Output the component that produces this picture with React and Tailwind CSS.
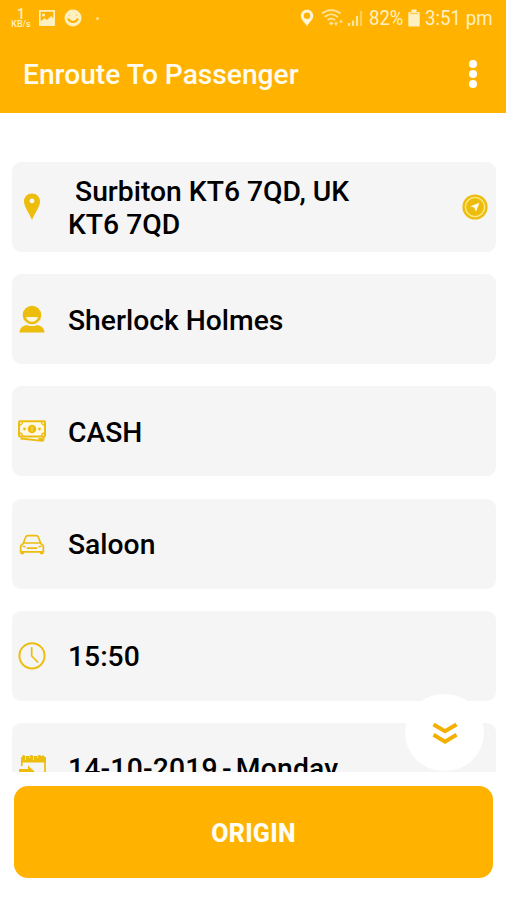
const GOLD = "#edbd0d";

function PinIcon() {
  return (
    <svg width="40" height="90" viewBox="0 0 40 90" fill={GOLD}>
      <path fillRule="evenodd" d="M20 31.500c-4.600 0-8 3.500-8 8 0 5.400 5 11 8 18.500 3-7.500 8-13.100 8-18.500 0-4.500-3.400-8-8-8zm0 5a2.400 2.400 0 1 1 0 4.800 2.400 2.400 0 0 1 0-4.800z" />
    </svg>
  );
}

function PersonIcon() {
  return (
    <svg width="40" height="90" viewBox="0 0 40 90" fill={GOLD}>
      <circle cx="20" cy="41" r="9.300" />
      <path d="M14 43h12c-.6 3.200-3 4.800-6 4.800s-5.400-1.600-6-4.800z" fill="#fdf8df" />
      <path d="M7.500 58.500c.2-4.500 2.600-6.600 7.400-7.600 3 1.600 7.200 1.600 10.200 0 4.800 1 7.200 3.100 7.400 7.600z" />
    </svg>
  );
}

function CashIcon() {
  return (
    <svg width="40" height="90" viewBox="0 0 40 90" fill="none" stroke={GOLD}>
      <rect x="7" y="35.200" width="26" height="15.400" rx="1" strokeWidth="2" fill="#fdf9e6" />
      <circle cx="20" cy="43" r="4.300" fill={GOLD} stroke="none" />
      <path d="M20 40.500v5" stroke="#f7df7d" strokeWidth="1" />
      <circle cx="12.500" cy="43" r="1.400" fill={GOLD} stroke="none" />
      <circle cx="27.500" cy="43" r="1.400" fill={GOLD} stroke="none" />
      <path d="M7 39c2.200 0 3.500-1.300 3.500-3.500M33 39c-2.200 0-3.500-1.300-3.500-3.500M7 47c2.200 0 3.500 1.300 3.500 3.500M33 47c-2.200 0-3.500 1.300-3.500 3.500" strokeWidth="1.300" />
      <path d="M8.500 52.500l21.500 2.300 1.300-.4.500-3.500M26.500 53h4" strokeWidth="1.800" />
    </svg>
  );
}

function CarIcon() {
  return (
    <svg width="40" height="90" viewBox="0 0 40 90" fill="none" stroke={GOLD} strokeWidth="1.700" strokeLinejoin="round" strokeLinecap="round">
      <path d="M11.200 44.500l2.400-6.200c.5-1.200 1.200-1.700 2.400-1.700h8c1.200 0 1.900.5 2.400 1.700l2.400 6.200c1.800 1 2.600 2.300 2.600 4v4.300H8.600v-4.300c0-1.700.8-3 2.600-4zM12 44h16" />
      <path d="M9.300 53v1.300h2V53M28.700 53v1.300h2V53M15.500 49.200h9M11.300 47.300l1.500.4M28.700 47.300l-1.500.4" />
    </svg>
  );
}

function ClockIcon() {
  return (
    <svg width="40" height="90" viewBox="0 0 40 90" fill="none" stroke={GOLD}>
      <circle cx="20" cy="44.800" r="12.600" strokeWidth="2" />
      <path d="M19.700 36.800V45l6 6" strokeWidth="1.700" strokeLinecap="round" />
    </svg>
  );
}

function CalendarIcon() {
  return (
    <svg width="40" height="90" viewBox="0 0 40 90" fill={GOLD}>
      <path d="M9 34.500l2.500-1.500h20l2.500 1.500v5H9z" />
      <path d="M11.500 32v4M15.500 33v4.500M19.500 32v4M23.500 33v4.500M27.500 32v4.500M31 32.500v4" stroke={GOLD} strokeWidth="2" />
      <path d="M13.500 33.500v3.500M17.500 32v3M21.500 33.500v3.500M25.500 32v3" stroke="#f8e49a" strokeWidth="1" />
      <path d="M9.800 39v4M33 39v18H17" fill="none" stroke={GOLD} strokeWidth="1.700" />
      <path d="M7 46h9v-3.500l7 6.500-7 6.500V52H7z" />
    </svg>
  );
}

function NavigateIcon() {
  return (
    <svg className="shrink-0" width="26" height="26" viewBox="0 0 26 26">
      <circle cx="13" cy="13" r="12.600" fill={GOLD} />
      <circle cx="13" cy="13" r="9.600" fill="none" stroke="#fae98a" strokeWidth="1.400" />
      <path d="M17.500 8.700l-3.600 9-1.500-4-4-1.400z" fill="#fffbea" />
    </svg>
  );
}

function StatusBar() {
  return (
    <div className="flex h-9 items-center justify-between pr-[13px] pl-[11px] text-[#fff0c2]">
      <div className="flex h-full items-center">
        <div className="flex w-5 flex-col items-center">
          <span className="h-3 text-[14px] leading-3 font-medium">1</span>
          <span className="h-[8px] text-[9px] leading-[8px] font-medium">KB/s</span>
        </div>
        <svg className="ml-[7px]" width="18" height="18" viewBox="0 0 18 18">
          <path fill="currentColor" fillRule="evenodd" d="M2 1h14q1 0 1 1v14q0 1-1 1H2q-1 0-1-1V2q0-1 1-1zm.7 1.700v9.600l3.800-3 2.500 1.800 4-4.200 2.300 2.400V2.700z" />
          <circle cx="5.500" cy="6" r="1.500" fill="currentColor" />
        </svg>
        <svg className="ml-2" width="18" height="18" viewBox="0 0 18 18">
          <circle cx="9" cy="9" r="8.500" fill="currentColor" />
          <path d="M4 9.500c2 4.500 8 4.500 10 0" fill="none" stroke="#ffb300" strokeWidth="2" />
          <circle cx="5.300" cy="6" r=".6" fill="#ffb300" />
          <circle cx="12.700" cy="6" r=".6" fill="#ffb300" />
        </svg>
        <span className="ml-[14px] size-[3px] rounded-full bg-[#ffdf88]" />
      </div>
      <div className="flex h-full items-center">
        <svg width="14" height="18" viewBox="0 0 14 18">
          <path fill="#fff5d8" fillRule="evenodd" d="M7 .7C3.400.7.800 3.400.800 6.800c0 4 4 6.700 6.200 10.500 2.200-3.800 6.200-6.500 6.200-10.500C13.200 3.400 10.600.7 7 .7zm0 2.800a3.200 3.200 0 1 1 0 6.400 3.200 3.200 0 0 1 0-6.400z" />
        </svg>
        <svg className="ml-[7px]" width="23" height="18" viewBox="0 0 23 18" fill="none" stroke="#ffe6a0" strokeWidth="1.700">
          <path d="M1 4.500c5.500-4.600 13-4.600 18.500 0M3.700 8c4-3.400 9.200-3.400 13.200 0M6.500 11.200c2.300-2 5.300-2 7.600 0" />
          <path d="M8 14.500l2.200-2.300 2.200 2.300-2.200 2z" fill="#ffe6a0" stroke="none" />
          <path d="M13 13.500h4l-2 3.500zM18 13.500h4l-2-3z" fill="#ffe6a0" stroke="none" />
        </svg>
        <svg className="ml-[3px]" width="16" height="18" viewBox="0 0 16 18" strokeWidth="2.200" stroke="#ffe6a0">
          <path d="M2 17v-3M6 17v-5.500M10 17V7" />
          <path d="M14 17V2" stroke="#ffcf5c" />
        </svg>
        <span className="ml-[6px] w-[36px] origin-left scale-x-[0.88] text-[21px] leading-none whitespace-nowrap">82%</span>
        <svg className="ml-[3px]" width="12" height="18" viewBox="0 0 12 18">
          <path fill="#fff0c2" d="M3.500.5h5V3H11q.7 0 .7.700v13q0 .8-.7.800H1q-.7 0-.7-.8v-13Q.3 3 1 3h2.500z" />
          <path d="M2 4.500h8" stroke="#ffc94a" strokeWidth="1.300" />
        </svg>
        <span className="ml-[5px] w-[68px] origin-left scale-x-[0.89] text-[21px] leading-none whitespace-nowrap">3:51 pm</span>
      </div>
    </div>
  );
}

function Row({ icon, children, action, spacing = "tracking-normal" }) {
  return (
    <div className="flex h-[90px] shrink-0 items-center rounded-[9px] bg-[#f5f5f5] pr-[8px]">
      {icon}
      <p className={`ml-4 flex-1 origin-left scale-x-[1.047] pt-1 text-[27px] leading-[33px] font-medium whitespace-pre-line text-black ${spacing}`}>{children}</p>
      {action}
    </div>
  );
}

export default function App() {
  return (
    <div className="flex h-[900px] w-[506px] flex-col overflow-hidden bg-white font-['Roboto',sans-serif]">
      <header className="h-[113px] shrink-0 bg-[#ffb300]">
        <StatusBar />
        <div className="flex h-[77px] items-center justify-between pr-[29px] pl-[23px]">
          <h1 className="origin-left scale-x-[1.043] pt-0.5 text-[27px] leading-none font-medium text-[#fffbee]">Enroute To Passenger</h1>
          <div className="flex flex-col gap-[2px] pb-0.5">
            <span className="size-2 rounded-full bg-white" />
            <span className="size-2 rounded-full bg-white" />
            <span className="size-2 rounded-full bg-white" />
          </div>
        </div>
      </header>
      <main className="relative h-[659px] shrink-0">
        <div className="flex h-full flex-col gap-[22.2px] overflow-hidden pt-[49px] pr-[10px] pl-3">
          <Row icon={<PinIcon />} action={<NavigateIcon />}>
            {"\u00a0Surbiton KT6 7QD, UK\nKT6 7QD"}
          </Row>
          <Row icon={<PersonIcon />}>Sherlock Holmes</Row>
          <Row icon={<CashIcon />}>CASH</Row>
          <Row icon={<CarIcon />}>Saloon</Row>
          <Row icon={<ClockIcon />}>15:50</Row>
          <Row icon={<CalendarIcon />} spacing="tracking-[0.2px] [word-spacing:-3px]">14-10-2019 - Monday</Row>
        </div>
        <button className="absolute right-[22px] bottom-[1px] flex h-[77px] w-[79px] items-center justify-center rounded-full bg-white">
          <svg width="26" height="24" viewBox="0 0 26 24" fill="none" stroke="#f4b000" strokeWidth="4">
            <path d="M1.500 3.500L13 10.300l11.500-6.800M1.500 13.800L13 20.600l11.500-6.800" />
          </svg>
        </button>
      </main>
      <button className="mt-[14px] mr-[13px] ml-[14px] flex h-[92px] shrink-0 items-center justify-center rounded-[14px] bg-[#ffb300] pt-1 text-[25px] font-extrabold tracking-[0.3px] text-[#fffdf3]">
        ORIGIN
      </button>
    </div>
  );
}
